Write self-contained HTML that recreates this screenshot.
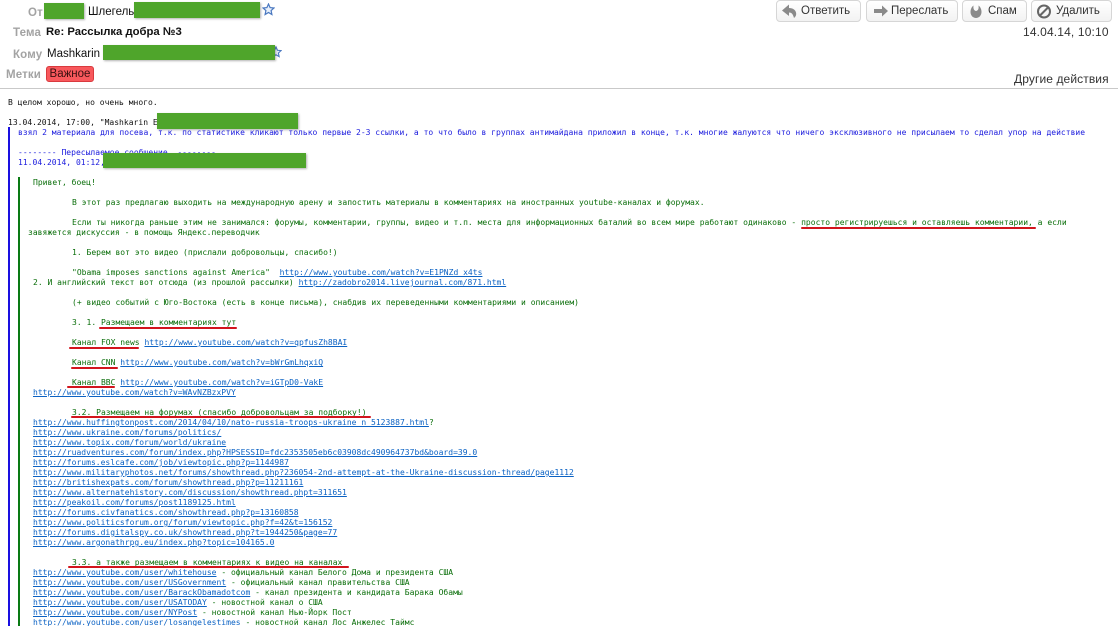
<!DOCTYPE html>
<html lang="ru"><head><meta charset="utf-8"><title>Re: Рассылка добра №3</title>
<style>
html,body{margin:0;padding:0;background:#fff;width:1118px;height:626px;overflow:hidden}
body{position:relative;font-family:"Liberation Sans","DejaVu Sans",sans-serif}
#wrap{position:absolute;left:0;top:0;width:1118px;height:626px;overflow:hidden;filter:blur(.3px)}
.l{position:absolute;margin-top:1px;white-space:pre;font:8px/10px "DejaVu Sans Mono","Liberation Mono",monospace;letter-spacing:.012px;color:#0a6e0a}
.k{color:#111}.b{color:#1a1add}
.l a{color:#0b62c4;text-decoration:underline}
.h{position:absolute;margin-top:1px;white-space:pre;font-size:11.5px;line-height:14px;color:#111}
.lb{color:#a3a3a3;font-weight:bold;letter-spacing:.15px}
.g{position:absolute;background:#4fa52b;box-shadow:1px 1px 2px rgba(0,0,0,.3)}
.r{position:absolute;height:2px;background:#d2151d;border-radius:1px}
.btn{position:absolute;top:0;height:22px;box-sizing:border-box;border:1px solid #d6d6d6;border-radius:4px;background:linear-gradient(#fff,#f2f2f2);font-size:11.5px;line-height:21px;color:#333;white-space:pre}
.btn svg{position:absolute;top:2px}
.btn span{position:absolute;top:0}
.bar{position:absolute;width:2px;bottom:0}
</style></head><body><div id="wrap">

<div class="h lb" style="left:28px;top:5px">От</div>
<div class="h" style="left:88px;top:4px">Шлегель</div>
<div class="g" style="left:44px;top:3px;width:40px;height:16px"></div>
<div class="g" style="left:134px;top:2px;width:126px;height:16px"></div>
<svg style="position:absolute;left:262px;top:3px" width="13" height="13" viewBox="0 0 13 13"><path d="M6.5 1l1.6 3.6 3.900.4-2.900 2.600.8 3.900-3.400-2-3.400 2 .8-3.900L1 5l3.900-.4z" fill="#e8f0fb" stroke="#4a78c0" stroke-width="1.2"/></svg>
<div class="h lb" style="left:13px;top:25px">Тема</div>
<div class="h" style="left:46px;top:24px;font-weight:bold;font-size:11.3px">Re: Рассылка добра №3</div>
<div class="h lb" style="left:13px;top:47px">Кому</div>
<div class="h" style="left:47px;top:46px">Mashkarin</div>
<svg style="position:absolute;left:270px;top:46px" width="12" height="12" viewBox="0 0 13 13"><path d="M6.5 1l1.600 3.600 3.900.4-2.900 2.600.8 3.900-3.400-2-3.400 2 .8-3.900L1 5l3.900-.4z" fill="#e8f0fb" stroke="#4a78c0" stroke-width="1.2"/></svg>
<div class="g" style="left:103px;top:45px;width:172px;height:15px"></div>
<div class="h lb" style="left:6px;top:67px">Метки</div>
<div style="position:absolute;left:46px;top:66px;width:48px;height:16px;box-sizing:border-box;background:#f8585c;border:1px solid #d93a3e;border-radius:3px;font-size:11.5px;line-height:14px;color:#3a1010;text-align:center">Важное</div>
<div style="position:absolute;left:0;top:88px;width:1118px;height:1px;background:#c9c9c9"></div>

<div class="btn" style="left:776px;width:85px"><svg style="left:4px" width="17" height="17" viewBox="0 0 17 17"><path d="M8 1.500L1 7.500 8 13V9.500c2.500 0 4 1.500 5 5.500 2-1.500 2.500-3.500 2-5.500C14.500 7 12 5 8 5z" fill="#8a8a8a"/></svg><span style="left:24px">Ответить</span></div>
<div class="btn" style="left:866px;width:92px"><svg style="left:6px" width="16" height="16" viewBox="0 0 16 16"><path d="M1 6h8V2.500L15 8l-6 5.500V10H1z" fill="#8a8a8a"/></svg><span style="left:24px">Переслать</span></div>
<div class="btn" style="left:962px;width:65px"><svg style="left:5px" width="16" height="16" viewBox="0 0 16 16"><path d="M5.500 2.500C3.500 4 2.500 6.500 2.500 9c0 3.500 2.500 6 5.500 6s5.500-2.500 5.500-6c0-2.500-1-5-3-6.500 .3 2.500 .2 5-2.500 5.500C5.500 7.500 5.200 5 5.500 2.500z" fill="#8a8a8a"/></svg><span style="left:25px">Спам</span></div>
<div class="btn" style="left:1031px;width:81px"><svg style="left:4px" width="16" height="16" viewBox="0 0 16 16"><circle cx="8" cy="8.500" r="6" fill="none" stroke="#666" stroke-width="2"/><path d="M4 12.500L12 4.500" stroke="#666" stroke-width="2"/></svg><span style="left:24px">Удалить</span></div>
<div class="h" style="left:1023px;top:24px;color:#333;font-size:12px;letter-spacing:.15px">14.04.14, 10:10</div>
<div class="h" style="left:1014px;top:71px;color:#333;font-size:12px;letter-spacing:.1px">Другие действия</div>

<div class="bar" style="left:8px;top:127px;background:#1a10e0"></div>
<div class="bar" style="left:18px;top:177px;background:#0a7a14"></div>

<div class="l k" style="left:8px;top:97px">В целом хорошо, но очень много.</div>
<div class="l k" style="left:8px;top:117px">13.04.2014, 17:00, "Mashkarin E</div>
<div class="g" style="left:157px;top:113px;width:141px;height:16px"></div>
<div class="l b" style="left:18px;top:127px">взял 2 материала для посева, т.к. по статистике кликают только первые 2-3 ссылки, а то что было в группах антимайдана приложил в конце, т.к. многие жалуются что ничего эксклюзивного не присылаем то сделал упор на действие</div>
<div class="l b" style="left:18px;top:147px">-------- Пересылаемое сообщение  --------</div>
<div class="l b" style="left:18px;top:157px">11.04.2014, 01:12,</div>
<div class="g" style="left:103px;top:153px;width:203px;height:15px"></div>

<div class="l" style="left:33px;top:177px">Привет, боец!</div>
<div class="l" style="left:72px;top:197px">В этот раз предлагаю выходить на международную арену и запостить материалы в комментариях на иностранных youtube-каналах и форумах.</div>
<div class="l" style="left:72px;top:217px">Если ты никогда раньше этим не занимался: форумы, комментарии, группы, видео и т.п. места для информационных баталий во всем мире работают одинаково - просто регистрируешься и оставляешь комментарии, а если</div>
<div class="l" style="left:28px;top:227px">завяжется дискуссия - в помощь Яндекс.переводчик</div>
<div class="l" style="left:72px;top:247px">1. Берем вот это видео (прислали добровольцы, спасибо!)</div>
<div class="l" style="left:72px;top:267px">"Obama imposes sanctions against America"  <a>http://www.youtube.com/watch?v=E1PNZd_x4ts</a></div>
<div class="l" style="left:33px;top:277px">2. И английский текст вот отсюда (из прошлой рассылки) <a>http://zadobro2014.livejournal.com/871.html</a></div>
<div class="l" style="left:72px;top:297px">(+ видео событий с Юго-Востока (есть в конце письма), снабдив их переведенными комментариями и описанием)</div>
<div class="l" style="left:72px;top:317px">3. 1. Размещаем в комментариях тут</div>
<div class="l" style="left:72px;top:337px">Канал FOX news <a>http://www.youtube.com/watch?v=qpfusZh8BAI</a></div>
<div class="l" style="left:72px;top:357px">Канал CNN <a>http://www.youtube.com/watch?v=bWrGmLhqxiQ</a></div>
<div class="l" style="left:72px;top:377px">Канал BBC <a>http://www.youtube.com/watch?v=iGTpD0-VakE</a></div>
<div class="l" style="left:33px;top:387px"><a>http://www.youtube.com/watch?v=WAvNZBzxPVY</a></div>
<div class="l" style="left:72px;top:407px">3.2. Размещаем на форумах (спасибо добровольцам за подборку!)</div>
<div class="l" style="left:33px;top:417px"><a>http://www.huffingtonpost.com/2014/04/10/nato-russia-troops-ukraine_n_5123887.html</a>?</div>
<div class="l" style="left:33px;top:427px"><a>http://www.ukraine.com/forums/politics/</a></div>
<div class="l" style="left:33px;top:437px"><a>http://www.topix.com/forum/world/ukraine</a></div>
<div class="l" style="left:33px;top:447px"><a>http://ruadventures.com/forum/index.php?HPSESSID=fdc2353505eb6c03908dc490964737bd&amp;board=39.0</a></div>
<div class="l" style="left:33px;top:457px"><a>http://forums.eslcafe.com/job/viewtopic.php?p=1144987</a></div>
<div class="l" style="left:33px;top:467px"><a>http://www.militaryphotos.net/forums/showthread.php?236054-2nd-attempt-at-the-Ukraine-discussion-thread/page1112</a></div>
<div class="l" style="left:33px;top:477px"><a>http://britishexpats.com/forum/showthread.php?p=11211161</a></div>
<div class="l" style="left:33px;top:487px"><a>http://www.alternatehistory.com/discussion/showthread.phpt=311651</a></div>
<div class="l" style="left:33px;top:497px"><a>http://peakoil.com/forums/post1189125.html</a></div>
<div class="l" style="left:33px;top:507px"><a>http://forums.civfanatics.com/showthread.php?p=13160858</a></div>
<div class="l" style="left:33px;top:517px"><a>http://www.politicsforum.org/forum/viewtopic.php?f=42&amp;t=156152</a></div>
<div class="l" style="left:33px;top:527px"><a>http://forums.digitalspy.co.uk/showthread.php?t=1944250&amp;page=77</a></div>
<div class="l" style="left:33px;top:537px"><a>http://www.argonathrpg.eu/index.php?topic=104165.0</a></div>
<div class="l" style="left:72px;top:557px">3.3. а также размещаем в комментариях к видео на каналах</div>
<div class="l" style="left:33px;top:567px"><a>http://www.youtube.com/user/whitehouse</a> - официальный канал Белого Дома и президента США</div>
<div class="l" style="left:33px;top:577px"><a>http://www.youtube.com/user/USGovernment</a> - официальный канал правительства США</div>
<div class="l" style="left:33px;top:587px"><a>http://www.youtube.com/user/BarackObamadotcom</a> - канал президента и кандидата Барака Обамы</div>
<div class="l" style="left:33px;top:597px"><a>http://www.youtube.com/user/USATODAY</a> - новостной канал о США</div>
<div class="l" style="left:33px;top:607px"><a>http://www.youtube.com/user/NYPost</a> - новостной канал Нью-Йорк Пост</div>
<div class="l" style="left:33px;top:617px"><a>http://www.youtube.com/user/losangelestimes</a> - новостной канал Лос Анжелес Таймс</div>

<div class="r" style="left:801px;top:227px;width:235px"></div>
<div class="r" style="left:99px;top:327px;width:138px"></div>
<div class="r" style="left:69px;top:347px;width:70px"></div>
<div class="r" style="left:71px;top:367px;width:47px"></div>
<div class="r" style="left:67px;top:386px;width:48px"></div>
<div class="r" style="left:71px;top:416px;width:300px"></div>
<div class="r" style="left:68px;top:566px;width:281px"></div>
</div></body></html>
